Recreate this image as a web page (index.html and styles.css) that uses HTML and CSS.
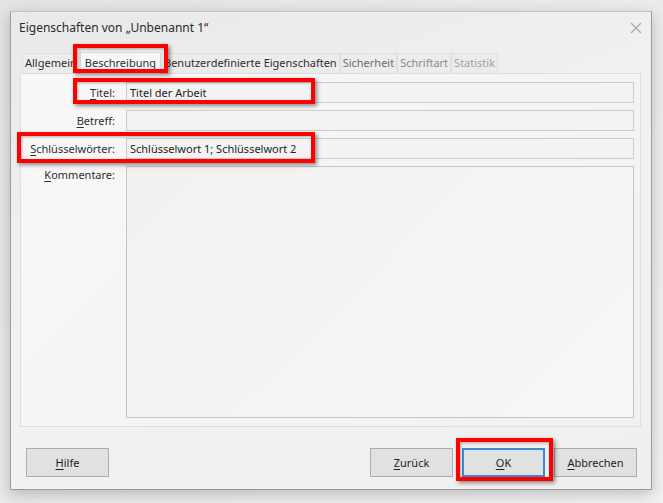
FILE: index.html
```html
<!DOCTYPE html>
<html lang="de">
<head>
    <meta charset="UTF-8">
    <title>Eigenschaften von „Unbenannt 1“</title>
    <link rel="stylesheet" href="styles.css">
</head>
<body>

    <!-- Dialog -->
    <div class="dialog">
        <div class="titlebar">
            <span class="title">Eigenschaften von „Unbenannt 1“</span>
            <svg class="close" width="12" height="12" viewBox="0 0 12 12">
                <path d="M1 1 L11 11 M11 1 L1 11" stroke="#a8a8a8" stroke-width="1.2" fill="none"/>
            </svg>
        </div>

        <div class="body">
            <div class="tabs">
                <div class="tab">Allgemein</div>
                <div class="tab active">Beschreibung</div>
                <div class="tab">Benutzerdefinierte Eigenschaften</div>
                <div class="tab dim1">Sicherheit</div>
                <div class="tab dim2">Schriftart</div>
                <div class="tab dim3">Statistik</div>
            </div>

            <div class="panel">
                <label class="lbl"><u>T</u>itel:</label>
                <div class="field">Titel der Arbeit</div>
                <label class="lbl"><u>B</u>etreff:</label>
                <div class="field"></div>
                <label class="lbl"><u>S</u>chlüsselwörter:</label>
                <div class="field">Schlüsselwort 1; Schlüsselwort 2</div>
                <label class="lbl lbl-top"><u>K</u>ommentare:</label>
                <div class="field area"></div>
            </div>

            <div class="buttons">
                <button class="btn"><u>H</u>ilfe</button>
                <div class="spacer"></div>
                <button class="btn"><u>Z</u>urück</button>
                <button class="btn default"><u>O</u>K</button>
                <button class="btn"><u>A</u>bbrechen</button>
            </div>
        </div>
    </div>

    <!-- Markierungen -->
    <div class="mark mark-tab"></div>
    <div class="mark mark-titel"></div>
    <div class="mark mark-keys"></div>
    <div class="mark mark-ok"></div>

</body>
</html>
```

FILE: styles.css
```css
body {
    margin: 0;
    width: 663px;
    height: 503px;
    overflow: hidden;
    font-family: "Noto Sans", "Open Sans", sans-serif;
    font-size: 11px;
    color: #1e1e1e;
    background: linear-gradient(135deg, #e4e4e4 0%, #ececec 60%, #f2f2f2 100%);
    position: relative;
}
u {
    text-decoration: underline;
    text-underline-offset: 2px;
}
.dialog {
    position: absolute;
    left: 10px;
    top: 11px;
    width: 640px;
    height: 477px;
    border: 1px solid #9c9c9c;
    border-top-color: #c4c4c4;
    background: linear-gradient(160deg, #e9e9e9 0%, #f2f2f2 50%, #efefef 100%);
    box-shadow: 0 4px 14px rgba(0,0,0,0.22);
}
.titlebar {
    height: 30px;
    display: flex;
    align-items: center;
    justify-content: space-between;
    padding: 0 9px 0 8px;
}
.title {
    font-size: 12px;
    color: #2a2a2a;
}
.close {
    margin-top: 1px;
}
.body {
    padding: 11px 10px 0 9px;
}
.tabs {
    display: flex;
    align-items: flex-end;
    height: 20px;
    padding-left: 2px;
}
.tab {
    height: 19px;
    line-height: 18px;
    padding: 0 2px;
    border: 1px solid #e0e0e0;
    border-bottom: none;
    color: #2e2e2e;
    background: #ececec;
    white-space: nowrap;
}
.tab.active {
    height: 21px;
    line-height: 20px;
    padding: 0 4px;
    background: #f7f7f7;
    border-color: #d8d8d8;
    position: relative;
    top: 1px;
}
.tab.dim1 { color: #6e6e6e; }
.tab.dim2 { color: #8a8a8a; }
.tab.dim3 { color: #a2a2a2; }

.panel {
    height: 336px;
    border: 1px solid #dedede;
    background: linear-gradient(135deg, #f8f8f8 0%, #f1f1f1 100%);
    padding: 8px 6px 8px 0;
    display: grid;
    grid-template-columns: 94px 508px;
    grid-template-rows: 21px 21px 21px 1fr;
    column-gap: 11px;
    row-gap: 7px;
}
.lbl {
    text-align: right;
    line-height: 21px;
    color: #2e2e2e;
}
.lbl-top {
    line-height: 18px;
}
.field {
    border: 1px solid #cccccc;
    background: #f3f3f3;
    line-height: 19px;
    padding: 0 3px;
    color: #1e1e1e;
}
.area {
    background: linear-gradient(135deg, #f1f1f1 0%, #f7f7f7 100%);
    border-color: #c6c6c6;
}

.buttons {
    display: flex;
    gap: 9px;
    margin-top: 21px;
    padding: 0 4px 0 6px;
}
.spacer {
    flex: 1;
}
.btn {
    width: 83px;
    height: 29px;
    font-family: inherit;
    font-size: 11px;
    color: #1e1e1e;
    background: #e1e1e1;
    border: 1px solid #adadad;
    padding: 0;
}
.btn.default {
    border: 2px solid #3a8ad6;
}

.mark {
    position: absolute;
    border: 4px solid #ff0000;
    box-shadow: 2px 2px 4px rgba(0,0,0,0.45), inset 1px 1px 3px rgba(0,0,0,0.3);
}
.mark-tab {
    left: 73px;
    top: 44px;
    width: 87px;
    height: 21px;
}
.mark-titel {
    left: 73px;
    top: 78px;
    width: 234px;
    height: 18px;
}
.mark-keys {
    left: 17px;
    top: 132px;
    width: 290px;
    height: 23px;
}
.mark-ok {
    left: 456px;
    top: 438px;
    width: 89px;
    height: 35px;
}
```
